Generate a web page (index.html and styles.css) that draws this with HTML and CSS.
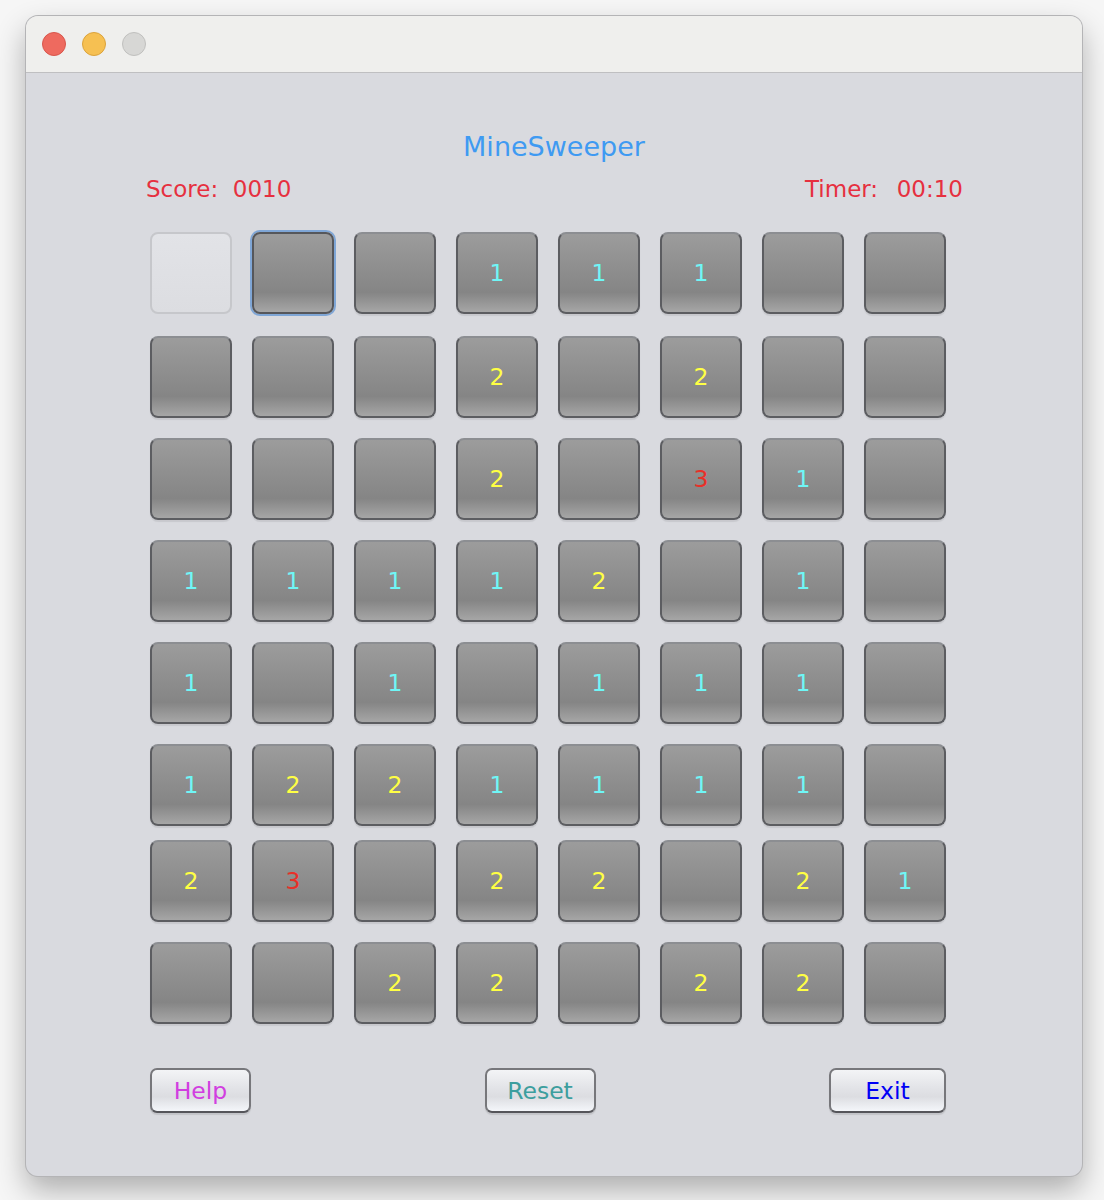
FILE: index.html
```html
<!DOCTYPE html>
<html>
<head>
<meta charset="utf-8">
<link rel="stylesheet" href="styles.css">
</head>
<body>
<div class="window">
  <div class="titlebar">
    <span class="light red"></span>
    <span class="light yellow"></span>
    <span class="light grey"></span>
  </div>
  <div class="content">
    <div class="title">MineSweeper</div>
    <div class="status">
      <span class="score">Score:&nbsp; 0010</span>
      <span class="timer">Timer:&nbsp; 00:10</span>
    </div>
    <div class="board">
      <div class="row r1">
        <div class="cell open"></div><div class="cell focus"></div><div class="cell"></div><div class="cell n1">1</div><div class="cell n1">1</div><div class="cell n1">1</div><div class="cell"></div><div class="cell"></div>
      </div>
      <div class="row">
        <div class="cell"></div><div class="cell"></div><div class="cell"></div><div class="cell n2">2</div><div class="cell"></div><div class="cell n2">2</div><div class="cell"></div><div class="cell"></div>
      </div>
      <div class="row">
        <div class="cell"></div><div class="cell"></div><div class="cell"></div><div class="cell n2">2</div><div class="cell"></div><div class="cell n3">3</div><div class="cell n1">1</div><div class="cell"></div>
      </div>
      <div class="row">
        <div class="cell n1">1</div><div class="cell n1">1</div><div class="cell n1">1</div><div class="cell n1">1</div><div class="cell n2">2</div><div class="cell"></div><div class="cell n1">1</div><div class="cell"></div>
      </div>
      <div class="row">
        <div class="cell n1">1</div><div class="cell"></div><div class="cell n1">1</div><div class="cell"></div><div class="cell n1">1</div><div class="cell n1">1</div><div class="cell n1">1</div><div class="cell"></div>
      </div>
      <div class="row r6">
        <div class="cell n1">1</div><div class="cell n2">2</div><div class="cell n2">2</div><div class="cell n1">1</div><div class="cell n1">1</div><div class="cell n1">1</div><div class="cell n1">1</div><div class="cell"></div>
      </div>
      <div class="row">
        <div class="cell n2">2</div><div class="cell n3">3</div><div class="cell"></div><div class="cell n2">2</div><div class="cell n2">2</div><div class="cell"></div><div class="cell n2">2</div><div class="cell n1">1</div>
      </div>
      <div class="row">
        <div class="cell"></div><div class="cell"></div><div class="cell n2">2</div><div class="cell n2">2</div><div class="cell"></div><div class="cell n2">2</div><div class="cell n2">2</div><div class="cell"></div>
      </div>
    </div>
    <div class="buttons">
      <button class="btn help">Help</button>
      <button class="btn reset">Reset</button>
      <button class="btn exit">Exit</button>
    </div>
  </div>
</div>
</body>
</html>
```
FILE: styles.css
```css
html, body {
  margin: 0;
  padding: 0;
  background: #f6f6f6;
}
body {
  width: 1104px;
  height: 1200px;
  overflow: hidden;
  font-family: "DejaVu Sans", "Noto Sans", sans-serif;
}
.window {
  margin: 16px 0 0 26px;
  width: 1056px;
  height: 1160px;
  border-radius: 12px;
  background: #d9dadf;
  box-shadow: 0 0 0 1px #b4b4b6, 0 14px 30px rgba(0,0,0,0.30);
  overflow: hidden;
  box-sizing: border-box;
}
.titlebar {
  height: 57px;
  background: #efefed;
  border-bottom: 1px solid #bfbfc1;
  box-sizing: border-box;
  display: flex;
  align-items: center;
  padding-left: 16px;
  gap: 16px;
}
.light {
  width: 24px;
  height: 24px;
  border-radius: 50%;
  box-sizing: border-box;
}
.light.red { background: #ee6a5f; border: 1px solid #d8564c; }
.light.yellow { background: #f6c052; border: 1px solid #dba33c; }
.light.grey { background: #d7d7d5; border: 1px solid #c0c0be; }
.content {
  padding: 59px 0 0 0;
}
.title {
  text-align: center;
  font-size: 27px;
  line-height: 30px;
  color: #3f9af2;
}
.status {
  display: flex;
  justify-content: space-between;
  margin: 13px 119px 0 120px;
  font-size: 23px;
  line-height: 28px;
}
.score { color: #e6303f; }
.timer { color: #e6303f; word-spacing: 2px; }
.board {
  margin: 29px 0 0 124px;
  width: 796px;
  display: flex;
  flex-direction: column;
  gap: 20px;
}
.row {
  display: flex;
  gap: 20px;
}
.row.r1 { margin-bottom: 2px; }
.row.r6 { margin-bottom: -6px; }
.cell {
  width: 82px;
  height: 82px;
  box-sizing: border-box;
  border-radius: 8px;
  border: 2px solid #5c5d61;
  border-top-color: #8c8e92;
  background: linear-gradient(to bottom, #9c9c9c 0%, #8e8e8e 45%, #858585 75%, #a6a6a6 100%);
  box-shadow: 0 2px 1px rgba(0,0,0,0.08);
  display: flex;
  align-items: center;
  justify-content: center;
  font-size: 23.5px;
  line-height: 1;
  padding-top: 1px;
}
.cell.open {
  background: linear-gradient(to bottom, #e2e3e7 0%, #dcdde1 100%);
  border: 2px solid #c6c7cb;
  box-shadow: none;
}
.cell.focus {
  box-shadow: 0 0 0 2px #7fa6d6;
  border-color: #56575b;
}
.n1 { color: #6ff6f6; }
.n2 { color: #ffff44; }
.n3 { color: #e83028; }
.buttons {
  margin: 44px 0 0 124px;
  width: 796px;
  display: flex;
  justify-content: space-between;
}
.btn {
  height: 45px;
  box-sizing: border-box;
  border-radius: 7px;
  border: 2px solid #77777b;
  border-bottom-color: #55555a;
  background: linear-gradient(to bottom, #f3f4f6 0%, #e2e3e7 45%, #dcdde1 65%, #f4f6fa 100%);
  box-shadow: 0 2px 1px rgba(0,0,0,0.10);
  font-family: "DejaVu Sans", "Noto Sans", sans-serif;
  font-size: 23.5px;
  padding: 0;
}
.btn.help { width: 101px; color: #d13ee0; }
.btn.reset { width: 111px; color: #3c9e9e; }
.btn.exit { width: 117px; color: #0000f5; }
```
